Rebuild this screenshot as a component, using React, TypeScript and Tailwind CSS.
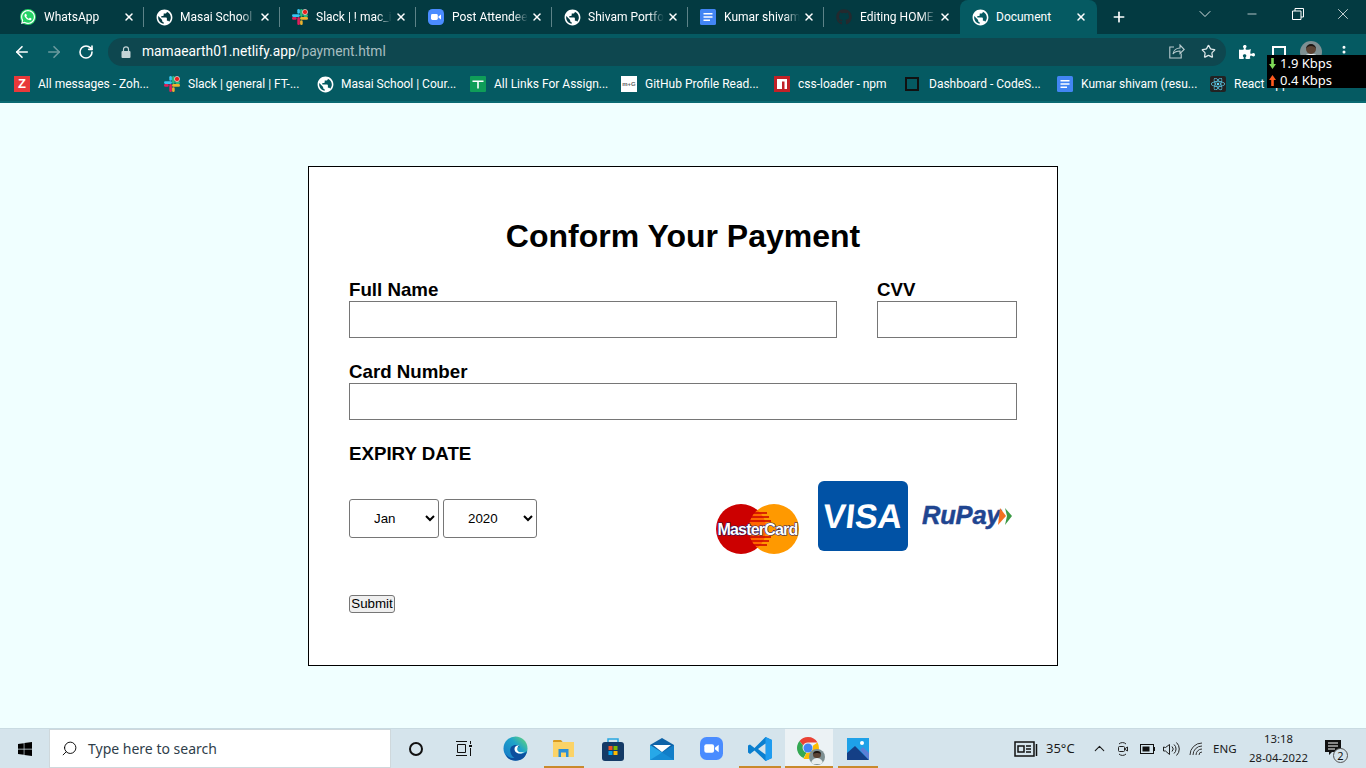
import React from 'react';
import { ArrowLeft, ArrowRight, ChevronDown, ChevronUp, Minus, MoreVertical, Plus, RotateCw, Search, Star, X } from 'lucide-react';
import { FaWhatsapp, FaGithub, FaReact, FaWindows, FaPuzzlePiece } from 'react-icons/fa';
import { MdPublic } from 'react-icons/md';

const ui = "font-['Roboto','Noto_Sans',sans-serif]";

const Globe = () => <MdPublic size={19} className="text-white -m-[2px]" />;

const Whatsapp = () => (
  <span className="w-4 h-4 rounded-full bg-[#25d366] flex items-center justify-center">
    <FaWhatsapp size={16} className="text-white" />
  </span>
);

const Slack = ({ dot }: { dot?: boolean }) => (
  <svg width="16" height="16" viewBox="0 0 16 16">
    <rect x="0" y="5.300" width="7.900" height="2.600" rx="1.300" fill="#36c5f0" />
    <rect x="5.300" y="0" width="2.600" height="4.700" rx="1.300" fill="#36c5f0" />
    <rect x="8.100" y="0" width="2.600" height="7.900" rx="1.300" fill="#2eb67d" />
    <rect x="11.300" y="5.300" width="4.700" height="2.600" rx="1.300" fill="#2eb67d" />
    <rect x="8.100" y="8.100" width="7.900" height="2.600" rx="1.300" fill="#ecb22e" />
    <rect x="8.100" y="11.300" width="2.600" height="4.700" rx="1.300" fill="#ecb22e" />
    <rect x="5.300" y="8.100" width="2.600" height="7.900" rx="1.300" fill="#e01e5a" />
    <rect x="0" y="8.100" width="4.700" height="2.600" rx="1.300" fill="#e01e5a" />
    {dot && <circle cx="13" cy="3" r="2.600" fill="#e8211d" stroke="#fff" strokeWidth="0.600" />}
  </svg>
);

const ZoomIcon = ({ size = 16 }: { size?: number }) => (
  <svg width={size} height={size} viewBox="0 0 16 16">
    <rect width="16" height="16" rx="4.500" fill="#4a8cff" />
    <rect x="3" y="5" width="6.800" height="6" rx="1.400" fill="#fff" />
    <path d="M10.400 7.400 13 5.400v5.200L10.400 8.600z" fill="#fff" />
  </svg>
);

const Docs = () => (
  <svg width="16" height="16" viewBox="0 0 16 16">
    <rect width="16" height="16" rx="1.500" fill="#4285f4" />
    <path d="M3.500 4h9v1.600h-9zM3.500 7.200h9v1.600h-9zM3.500 10.400h6.500V12H3.500z" fill="#fff" />
  </svg>
);

const Sheets = () => (
  <svg width="16" height="16" viewBox="0 0 16 16">
    <rect width="16" height="16" rx="1" fill="#0f9d58" />
    <path d="M2.500 4.500h11v1.600H8.800v6.400H7.200V6.100H2.500z" fill="#fff" />
  </svg>
);

const Npm = () => (
  <svg width="16" height="16" viewBox="0 0 16 16">
    <rect width="16" height="16" fill="#c12127" />
    <path d="M3 3h10v10h-2.500V5.500H8V13H3z" fill="#fff" />
  </svg>
);

const Zoho = () => (
  <span className="w-4 h-4 bg-[#e8393a] text-white text-[13px] font-bold leading-4 text-center font-['Liberation_Sans',sans-serif]">Z</span>
);

const Readme = () => (
  <span className="w-4 h-4 bg-white text-[#666] text-[6px] font-bold leading-4 text-center font-['Liberation_Sans',sans-serif]">m+G</span>
);

const Sandbox = () => <span className="w-[14px] h-[14px] -ml-[2px] border-2 border-[#111] block" />;

const ReactIcon = () => (
  <span className="w-4 h-4 bg-[#222] rounded-[2px] flex items-center justify-center">
    <FaReact size={14} className="text-[#61dafb]" />
  </span>
);

const Avatar = ({ cls }: { cls: string }) => (
  <span className={`rounded-full bg-[#7d8f92] flex flex-col items-center overflow-hidden ${cls}`}>
    <span className="w-[45%] h-[45%] mt-[15%] rounded-full bg-[#5a4334] border-t-2 border-[#1c1512] block shrink-0" />
    <span className="w-[75%] h-[40%] rounded-t-md bg-[#e8eef0] block shrink-0" />
  </span>
);

const tabs = [
  { title: 'WhatsApp', icon: <Whatsapp /> },
  { title: 'Masai School', icon: <Globe /> },
  { title: 'Slack | ! mac_interview', icon: <Slack dot /> },
  { title: 'Post Attendee', icon: <ZoomIcon /> },
  { title: 'Shivam Portfolio', icon: <Globe /> },
  { title: 'Kumar shivam', icon: <Docs /> },
  { title: 'Editing HOME', icon: <FaGithub size={16} className="text-[#24292e]" /> },
];

const bookmarks = [
  { title: 'All messages - Zoh...', icon: <Zoho />, w: 150 },
  { title: 'Slack | general | FT-...', icon: <Slack dot />, w: 153 },
  { title: 'Masai School | Cour...', icon: <Globe />, w: 153 },
  { title: 'All Links For Assign...', icon: <Sheets />, w: 151 },
  { title: 'GitHub Profile Read...', icon: <Readme />, w: 153 },
  { title: 'css-loader - npm', icon: <Npm />, w: 131 },
  { title: 'Dashboard - CodeS...', icon: <Sandbox />, w: 152 },
  { title: 'Kumar shivam (resu...', icon: <Docs />, w: 153 },
  { title: 'React App', icon: <ReactIcon />, w: 100 },
];

const TabBar = () => (
  <div className="h-[34px] bg-[#033a41] flex pl-2 text-white">
    {tabs.map((t, i) => (
      <div key={t.title} className="w-[136px] h-full flex items-center pl-3 relative">
        <span className="w-4 h-4 flex items-center justify-center shrink-0">{t.icon}</span>
        <span className="ml-2 w-[76px] overflow-hidden whitespace-nowrap text-[12px] [mask-image:linear-gradient(to_right,black_80%,transparent)]">{t.title}</span>
        <X size={12} strokeWidth={3} className="ml-[3px] shrink-0" />
        {i < 6 && <span className="absolute right-0 top-[7px] h-5 w-px bg-[#5d8388]" />}
      </div>
    ))}
    <div className="w-[137px] h-full bg-[#055a62] rounded-t-lg flex items-center pl-3">
      <span className="w-4 h-4 flex items-center justify-center shrink-0"><Globe /></span>
      <span className="ml-2 w-[76px] text-[12px]">Document</span>
      <X size={12} strokeWidth={3} className="ml-[3px] shrink-0" />
    </div>
    <Plus size={16} strokeWidth={2.500} className="ml-[14px] mt-[9px]" />
    <ChevronDown size={20} strokeWidth={1} className="ml-[68px] mt-[4px]" />
    <Minus size={14} strokeWidth={1.200} className="ml-[30px] mt-[7px]" />
    <svg width="12" height="12" viewBox="0 0 12 12" fill="none" stroke="#fff" className="ml-[33px] mt-2">
      <path d="M.5 3h8.500v8.500H.5zM3 3V.5h8.500V9H9" />
    </svg>
    <X size={18} strokeWidth={1} className="ml-[30px] mt-[5px]" />
  </div>
);

const Toolbar = () => (
  <div className="h-[33px] pt-[2px] bg-[#055a62] flex items-center text-white">
    <ArrowLeft size={18} strokeWidth={2.200} className="ml-[13px]" />
    <ArrowRight size={18} strokeWidth={2.200} className="ml-[14px] text-[#6b9a9e]" />
    <RotateCw size={16} strokeWidth={2.400} className="ml-[15px]" />
    <div className="ml-[14px] w-[1118px] h-7 rounded-full bg-[#0e474f] flex items-center">
      <svg width="10" height="12" viewBox="0 0 10 12" className="ml-[13px]">
        <path d="M2.500 5V3.300a2.500 2.500 0 0 1 5 0V5" fill="none" stroke="#c4d4d6" strokeWidth="1.200" />
        <rect x="0.500" y="5" width="9" height="7" rx="1" fill="#c4d4d6" />
      </svg>
      <span className="ml-[11px] text-[13.800px]">mamaearth01.netlify.app<span className="text-[#a7bec1]">/payment.html</span></span>
      <svg width="16" height="15" viewBox="0 0 16 15" fill="none" stroke="#b9cccf" strokeWidth="1.100" className="ml-auto mr-[16px]">
        <path d="M5 3H.8v11h11.400V9.500M4 10c.5-3.500 3.500-6 7-6V1l4.200 4.500L11 9.500V7c-3 0-5.500 1-7 3z" />
      </svg>
      <Star size={15} strokeWidth={2} className="mr-[10px] text-[#dfe9ea]" />
    </div>
    <FaPuzzlePiece size={16} className="ml-[13px]" />
    <span className="ml-[17px] w-[14px] h-[14px] border-2 border-white border-b-0 block mt-[2px]" />
    <Avatar cls="ml-[14px] w-[22px] h-[22px]" />
    <MoreVertical size={16} strokeWidth={2.500} className="ml-[14px]" />
  </div>
);

const Bookmarks = () => (
  <div className="h-9 bg-[#055a62] flex items-center pl-[14px] text-white overflow-hidden border-b-2 border-[#0a6a72]">
    {bookmarks.map(b => (
      <div key={b.title} className="flex items-center shrink-0" style={{ width: b.w }}>
        <span className="w-4 h-4 flex items-center justify-center shrink-0">{b.icon}</span>
        <span className="ml-2 text-[12px] whitespace-nowrap">{b.title}</span>
      </div>
    ))}
  </div>
);

const Mastercard = () => (
  <svg width="86" height="52" viewBox="0 0 86 52" className="mt-[22px]">
    <circle cx="26" cy="26" r="25" fill="#cc0000" />
    <circle cx="59" cy="26" r="25" fill="#ff9900" />
    <path d="M42.500 7a25 25 0 0 1 0 38a25 25 0 0 1 0-38z" fill="#ff6600" />
    <path d="M33 10h19M31 14h23M29 18h27M29 34h27M31 38h23M33 42h19" stroke="#cc0000" strokeWidth="1.600" />
    <text x="42.500" y="32" textAnchor="middle" fontFamily="Liberation Sans, sans-serif" fontWeight="700" fontSize="16" letterSpacing="-0.800" fill="#fff" stroke="#1a1a5e" strokeWidth="1.200" paintOrder="stroke">MasterCard</text>
  </svg>
);

const Visa = () => (
  <div className="w-[90px] h-[70px] rounded-md bg-[#0152a5] flex items-center justify-center ml-[17px]">
    <span className="text-white text-[34px] font-bold -skew-x-6 font-['Liberation_Sans',sans-serif]">VISA</span>
  </div>
);

const Rupay = () => (
  <svg width="92" height="36" viewBox="0 0 92 36" className="ml-[14px] mr-[3px] mt-[16px]">
    <text x="0" y="27" fontFamily="Liberation Sans, sans-serif" fontWeight="700" fontStyle="italic" fontSize="25.500" letterSpacing="-0.200" fill="#1f4590" stroke="#1f4590" strokeWidth="0.500">RuPay</text>
    <path d="M78 11l6 8-8 9z" fill="#f37021" />
    <path d="M83 11l7 8-7 9 2-9z" fill="#3c9a45" />
  </svg>
);

const inputCls = "block w-full h-[37px] border border-[#767676] bg-white";
const labelCls = "block text-[18.720px] font-bold leading-[23px] text-black";
const selectCls = "h-[39px] border border-[#767676] rounded-[3px] bg-white text-[13.330px] text-black pl-5";

const PaymentForm = () => (
  <form className="w-[750px] h-[500px] mx-auto border border-black bg-white pt-[51px] px-10 font-['Liberation_Sans',sans-serif]">
    <h1 className="text-[32px] font-bold text-center leading-[37px] text-black">Conform Your Payment</h1>
    <div className="flex gap-10 mt-[23px]">
      <label className="w-[488px]">
        <span className={labelCls}>Full Name</span>
        <input className={inputCls} />
      </label>
      <label className="w-[140px]">
        <span className={labelCls}>CVV</span>
        <input className={inputCls} />
      </label>
    </div>
    <label className="block mt-[22px]">
      <span className={labelCls}>Card Number</span>
      <input className={inputCls} />
    </label>
    <h3 className="text-[18.720px] font-bold leading-[21px] mt-[23px] text-black">EXPIRY DATE</h3>
    <div className="flex justify-between h-[90px] mt-[17px]">
      <div className="flex gap-1 pt-[18px]">
        <select className={`${selectCls} w-[90px]`} defaultValue="Jan">
          <option>Jan</option>
          <option>Feb</option>
        </select>
        <select className={`${selectCls} w-[94px]`} defaultValue="2020">
          <option>2020</option>
          <option>2021</option>
        </select>
      </div>
      <div className="flex items-start">
        <Mastercard />
        <Visa />
        <Rupay />
      </div>
    </div>
    <button type="button" className="block mt-[24px] w-[46px] h-[18px] border border-[#767676] rounded-[3px] bg-[#efefef] text-[13.330px] leading-[16px] text-black">Submit</button>
  </form>
);

const Slot = ({ w, active, line, children }: { w: number; active?: boolean; line?: boolean; children: React.ReactNode }) => (
  <div className={`relative h-full flex items-center justify-center shrink-0 ${active ? 'bg-[#ecf2f5]' : ''}`} style={{ width: w }}>
    {children}
    {line && <span className="absolute bottom-0 left-0 right-0 h-[2px] bg-[#c98a2c]" />}
  </div>
);

const Edge = () => (
  <svg width="25" height="25" viewBox="0 0 25 25">
    <defs>
      <linearGradient id="edgeA" x1="0" y1="1" x2="1" y2="0">
        <stop offset="0" stopColor="#1473c8" />
        <stop offset="0.600" stopColor="#1fa4c9" />
        <stop offset="1" stopColor="#6fdc70" />
      </linearGradient>
    </defs>
    <circle cx="12.500" cy="12.500" r="12" fill="url(#edgeA)" />
    <path d="M24 15c-2 2.500-5 3-8 2.500-3-.6-4.500-3-3.500-5 .8-1.500 3-2 4.500-1-1.500-3-6-3.500-8.500-1C6 13 7 19 11.500 22c-3 .6-7-1-9-4 2 7 12 9 18 4 2-1.800 3-4.500 3.500-7z" fill="#0c4f9e" />
    <path d="M16 9.500c-2.500-.5-4.500 1-4.500 3.500 0 3 3 5 6.500 4.500 1.500-.3 2.600-1 3.500-2-2.500 1.500-6 1-7-1-.8-1.700 0-4 1.500-5z" fill="#fff" />
  </svg>
);

const Folder = () => (
  <svg width="22" height="20" viewBox="0 0 22 20">
    <path d="M0 2a1 1 0 0 1 1-1h7l2 2.500H0z" fill="#d99a1f" />
    <rect x="0" y="3" width="21" height="15" fill="#fbd367" />
    <path d="M5.500 10h10v8h-2.500v-4.500H8V18H5.500z" fill="#2b8fd6" />
  </svg>
);

const Store = () => (
  <svg width="24" height="24" viewBox="0 0 24 24">
    <path d="M7 5V2h10v3" fill="none" stroke="#29a6e0" strokeWidth="1.500" />
    <rect x="1" y="5" width="22" height="19" rx="3" fill="#143a66" />
    <rect x="7.500" y="9" width="4" height="4" fill="#f25022" />
    <rect x="12.500" y="9" width="4" height="4" fill="#7fba00" />
    <rect x="7.500" y="14" width="4" height="4" fill="#00a4ef" />
    <rect x="12.500" y="14" width="4" height="4" fill="#ffb900" />
  </svg>
);

const Mail = () => (
  <svg width="24" height="22" viewBox="0 0 24 22">
    <path d="M0 7 12 0l12 7v15H0z" fill="#0f63a8" />
    <path d="M0 7v15h24z" fill="#27a8e8" />
    <path d="M24 7v15H0z" fill="#1384d0" opacity="0.800" />
    <path d="M3 7h18l-9 7z" fill="#fff" />
  </svg>
);

const VsCode = () => (
  <svg width="24" height="24" viewBox="0 0 24 24">
    <path d="M17.500 0 24 3v18l-6.500 3-11-10.500-4.500 3.500L0 15.500V8.500L2 7.500l4.500 3.500z" fill="#0b7fcf" />
    <path d="M17.500 0 24 3v18l-6.500 3z" fill="#1f9cf0" />
    <path d="M17.500 6.500v11L10 12z" fill="#d5e4ec" />
  </svg>
);

const Chrome = () => (
  <span className="relative w-6 h-6 block">
    <svg width="22" height="22" viewBox="0 0 22 22">
      <path d="M11 0a11 11 0 0 1 9.500 5.500H11a5.500 5.500 0 0 0-5 3L2.500 4A11 11 0 0 1 11 0z" fill="#ea4335" />
      <path d="M2.500 4 6 8.500a5.500 5.500 0 0 0 3.500 7.300L6.500 21A11 11 0 0 1 2.500 4z" fill="#34a853" />
      <path d="M20.500 5.500A11 11 0 0 1 11 22H6.500l3-6.200a5.500 5.500 0 0 0 6.300-7z" fill="#fbbc05" />
      <circle cx="11" cy="11" r="4.500" fill="#4285f4" />
    </svg>
    <Avatar cls="absolute right-[-4px] bottom-[-4px] w-4 h-4" />
  </span>
);

const Photos = () => (
  <svg width="22" height="22" viewBox="0 0 22 22">
    <rect width="22" height="22" fill="#1ea1e8" />
    <circle cx="15" cy="5" r="2" fill="#fff" />
    <path d="M0 22V15l8-7 14 14z" fill="#143f86" />
    <path d="M13 12l3-3 6 6v7z" fill="#5c7fd6" />
  </svg>
);

const Taskbar = () => (
  <div className="h-10 bg-[#d5e4ec] flex items-center border-t border-[#c9dbe2] overflow-hidden font-['Noto_Sans','Open_Sans',sans-serif]">
    <div className="w-[49px] flex justify-center shrink-0"><FaWindows size={16} className="text-black" /></div>
    <div className="w-[342px] h-full bg-white border border-[#cfd8dc] flex items-center pl-[11px] text-[14px] text-[#2f3e4a] shrink-0">
      <Search size={17} strokeWidth={1.300} className="-scale-x-100 text-black" />
      <span className="ml-[10px]">Type here to search</span>
    </div>
    <div className="h-full flex items-center ml-[1px]">
      <Slot w={48}><span className="w-[14px] h-[14px] rounded-full border-2 border-[#111] block" /></Slot>
      <Slot w={47}>
        <svg width="16" height="15" viewBox="0 0 16 15" fill="none" stroke="#111"><path d="M0 .5h11M1.500 3.500h8v8h-8zM0 14.500h11M14.500 0v3M14.500 7v8" /><rect x="13" y="4" width="3" height="2" fill="#111" stroke="none" /></svg>
      </Slot>
      <Slot w={57}><Edge /></Slot>
      <Slot w={40} line><Folder /></Slot>
      <Slot w={57}><Store /></Slot>
      <Slot w={42}><Mail /></Slot>
      <Slot w={56}><ZoomIcon size={23} /></Slot>
      <Slot w={42} line><VsCode /></Slot>
      <div className="w-1" />
      <Slot w={48} active line><Chrome /></Slot>
      <div className="w-[5px]" />
      <Slot w={40} line><Photos /></Slot>
    </div>
    <div className="ml-auto h-full flex items-center text-[#1b1b1b] pr-[25px]">
      <svg width="24" height="16" viewBox="0 0 24 16" fill="none" stroke="#111" strokeWidth="1.500">
        <rect x="1" y="1" width="19" height="14" />
        <rect x="4" y="5" width="6" height="6" />
        <path d="M12 5h5M12 8h5M12 11h5M22.500 3v12" />
      </svg>
      <span className="ml-2 text-[13px] w-[36px]">35°C</span>
      <ChevronUp size={17} strokeWidth={1.500} className="ml-[9px]" />
      <svg width="12" height="16" viewBox="0 0 12 16" fill="none" stroke="#222" className="ml-[9px]">
        <path d="M2 3a5 5 0 0 1 7 0M2 13a5 5 0 0 0 7 0" />
        <rect x="1.500" y="5.500" width="6" height="5" rx="1" /><path d="M7.500 8l3-2v4z" />
      </svg>
      <svg width="15" height="10" viewBox="0 0 15 10" className="ml-[11px]">
        <rect x="0.500" y="0.500" width="13" height="9" fill="none" stroke="#111" /><rect x="2.500" y="2.500" width="7" height="5" fill="#111" /><rect x="14" y="3" width="1" height="4" fill="#111" />
      </svg>
      <svg width="17" height="14" viewBox="0 0 17 14" fill="none" stroke="#222" className="ml-[8px]">
        <path d="M.500 5v4h2l4 3.500v-10l-4 3zM9 4.500a3.500 3.500 0 0 1 0 5M11 2.500a6 6 0 0 1 0 9M13.500.5a9 9 0 0 1 0 13" />
      </svg>
      <svg width="14" height="14" viewBox="0 0 14 14" fill="none" stroke="#333" className="ml-[9px]">
        <path d="M1 13A12 12 0 0 1 13 1M4 13a9 9 0 0 1 9-9M7 13a6 6 0 0 1 6-6M10 13a3 3 0 0 1 3-3" />
      </svg>
      <span className="ml-[10px] text-[11.500px] w-[24px]">ENG</span>
      <div className="ml-[11px] -mt-[2px] w-[61px] text-center text-[11.300px] leading-[19px]">
        <div>13:18</div>
        <div>28-04-2022</div>
      </div>
      <div className="ml-[16px] relative w-[16px] h-[16px] -mt-[2px]">
        <svg width="16" height="16" viewBox="0 0 16 16">
          <path d="M0 0h16v12H7l-3 3v-3H0z" fill="#111" />
          <path d="M3 3h10M3 6h10M3 9h7" stroke="#fff" strokeWidth="1" />
        </svg>
        <span className="absolute left-[8px] top-[8px] w-[15px] h-[15px] rounded-full bg-[#d5e4ec] border border-[#555] text-[11px] leading-[13px] text-center text-[#111]">2</span>
      </div>
    </div>
  </div>
);

const SpeedRow = ({ up, value }: { up?: boolean; value: string }) => (
  <div className="flex items-center pl-[2px] h-[17px]">
    <svg width="7" height="11" viewBox="0 0 7 11" className={up ? 'rotate-180' : ''}>
      <path d="M2.200 0h2.600v6H7L3.500 11 0 6h2.200z" fill={up ? '#ff5a1f' : '#7ed957'} />
    </svg>
    <span className="ml-[4px]">{value}</span>
  </div>
);

const App: React.FC = () => (
  <div className={`relative w-[1366px] h-[768px] flex flex-col overflow-hidden ${ui}`}>
    <TabBar />
    <Toolbar />
    <Bookmarks />
    <main className="flex-1 bg-[#f0ffff] pt-[63px]">
      <PaymentForm />
    </main>
    <Taskbar />
    {/* net speed meter floats over the browser toolbar */}
    <div className="absolute left-[1267px] top-[55px] w-[99px] h-[33px] bg-black text-white text-[13px] leading-[17px] font-['Noto_Sans',sans-serif]">
      <SpeedRow value="1.9 Kbps" />
      <SpeedRow up value="0.4 Kbps" />
    </div>
  </div>
);

export default App;
